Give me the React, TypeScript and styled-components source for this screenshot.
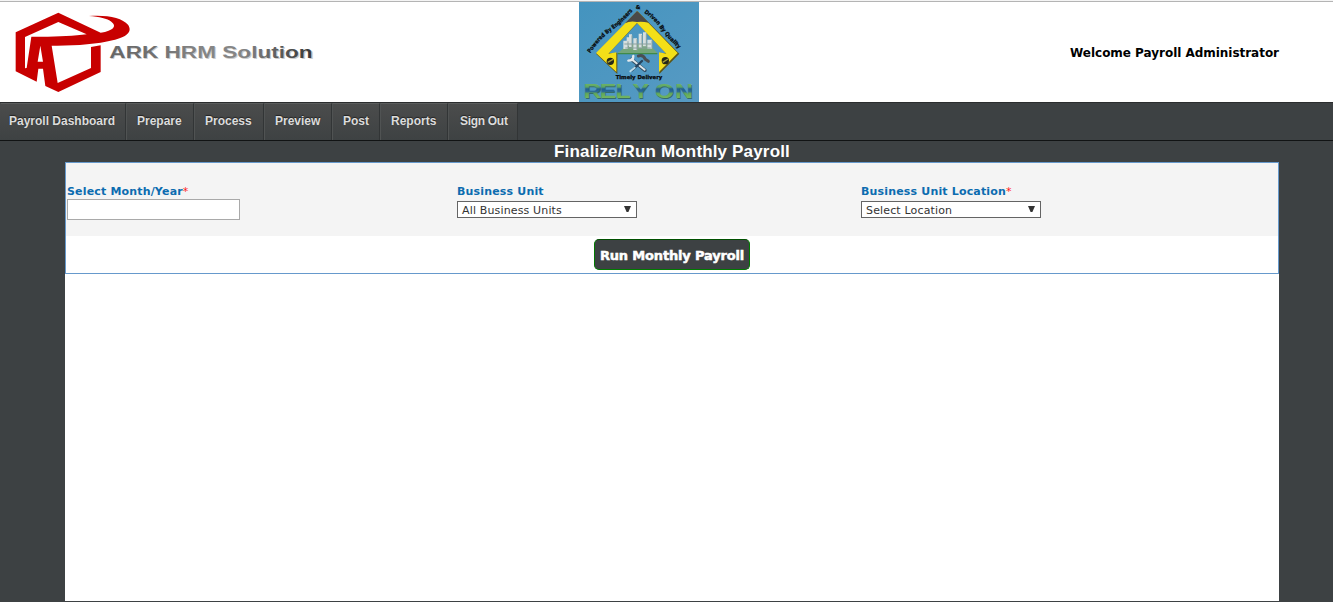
import React from "react";
import styled, { createGlobalStyle } from "styled-components";

const GlobalStyle = createGlobalStyle`
  * { box-sizing: border-box; }
  body {
    margin: 0;
    background: #3d4143;
    font-family: "DejaVu Sans", Verdana, sans-serif;
    font-size: 11px;
    overflow: hidden;
  }
`;

const Page = styled.div`
  height: 602px;
  display: flex;
  flex-direction: column;
`;

const Header = styled.header`
  flex: none;
  height: 102px;
  padding-right: 54px;
  border-top: 1px solid #f4f4f4;
  background: #fff;
  box-shadow: inset 0 1px 0 #b4b4b4;
  display: grid;
  grid-template-columns: 579px 120px 1fr;
  align-items: center;
`;

const Brand = styled.svg`
  display: block;
  width: 330px;
  height: 100px;
  margin-top: 1px;
`;

const ClientLogo = styled.svg`
  display: block;
  width: 120px;
  height: 100px;
  margin-top: 1px;
`;

const Welcome = styled.div`
  justify-self: end;
  padding-top: 2px;
  font-size: 12px;
  font-weight: bold;
  line-height: 16px;
  letter-spacing: -0.03px;
  white-space: nowrap;
  color: #000;
`;

const Nav = styled.nav`
  flex: none;
  height: 39px;
  display: flex;
  border-top: 1px solid #2b2d2e;
  border-bottom: 1px solid #111314;
`;

const NavItem = styled.a<{ $width: number; $indent?: number; $spacing?: number }>`
  width: ${(p) => p.$width}px;
  height: 37px;
  padding-left: ${(p) => p.$indent ?? 10}px;
  border-top: 1px solid #5b5d5d;
  border-left: 1px solid #505353;
  border-right: 1px solid #323536;
  background: linear-gradient(#4b4c4c, #3e4243);
  color: #dcdcdc;
  font: bold 12px/34px "Liberation Sans", Arial, sans-serif;
  letter-spacing: ${(p) => p.$spacing ?? 0}px;
  text-shadow: 0 -1px 1px #222;
  white-space: nowrap;

  &:first-child {
    border-left-color: transparent;
  }
`;

const Main = styled.main`
  flex: 1;
  margin: 0 54px 1px 65px;
  display: flex;
  flex-direction: column;
`;

const Title = styled.h1`
  margin: 0;
  height: 21px;
  color: #fff;
  text-align: center;
  font: bold 17px/21px "Liberation Sans", Arial, sans-serif;
  letter-spacing: 0.16px;
`;

const Content = styled.div`
  flex: 1;
  background: #fff;
`;

const Form = styled.form`
  height: 112px;
  border: 1px solid #6699cc;
`;

const Fields = styled.div`
  height: 73px;
  padding: 21px 0 0 1px;
  background: #f4f4f4;
  display: grid;
  grid-template-columns: 390px 404px 1fr;
`;

const Label = styled.label`
  display: block;
  height: 15px;
  color: #0c6cb0;
  font-size: 11px;
  font-weight: bold;
  line-height: 15px;
  letter-spacing: 0.17px;
  white-space: nowrap;
`;

const Required = styled.span`
  color: #ff2020;
  font-weight: normal;
`;

const MonthInput = styled.input`
  display: block;
  width: 173px;
  height: 21px;
  border: 1px solid #a9a9a9;
  background: #fff;
`;

const SelectBox = styled.div`
  width: 180px;
  height: 17px;
  margin-top: 2px;
  padding: 0 5px 0 4px;
  border: 1px solid #646464;
  background: #fff;
  color: #333;
  font-size: 11px;
  line-height: 17px;
  letter-spacing: 0.15px;
  display: flex;
  justify-content: space-between;
`;

const Caret = styled.svg`
  width: 7px;
  height: 6px;
  margin-top: 4px;
`;

const Actions = styled.div`
  height: 37px;
  padding-top: 3px;
  display: flex;
  justify-content: center;
`;

const RunButton = styled.button`
  width: 156px;
  height: 31px;
  padding: 2px 0 0;
  border: 1px solid #007a00;
  border-top-color: #005000;
  border-radius: 5px;
  background: #3d4143;
  color: #fff;
  font: 800 13px/16px "DejaVu Sans", Verdana, sans-serif;
  letter-spacing: -0.17px;
  -webkit-text-stroke: 0.5px #fff;
  white-space: nowrap;
`;

const menu = [
  { label: "Payroll Dashboard", width: 126, indent: 8 },
  { label: "Prepare", width: 68 },
  { label: "Process", width: 70 },
  { label: "Preview", width: 68 },
  { label: "Post", width: 48 },
  { label: "Reports", width: 68 },
  { label: "Sign Out", width: 70, indent: 11, spacing: -0.3 },
];

function Select({ value }: { value: string }) {
  return (
    <SelectBox>
      <span>{value}</span>
      <Caret viewBox="0 0 7 6">
        <path d="M0 0H7L4.4 6H2.6Z" fill="#333" />
      </Caret>
    </SelectBox>
  );
}

function ArkLogo() {
  return (
    <Brand viewBox="0 6 990 300">
      <defs>
        <linearGradient id="ark" x1="0" x2="1" y1="0" y2="0">
          <stop offset="0" stopColor="#666" />
          <stop offset=".25" stopColor="#737373" />
          <stop offset=".45" stopColor="#858585" />
          <stop offset=".65" stopColor="#858585" />
          <stop offset="1" stopColor="#383838" />
        </linearGradient>
      </defs>
      <g fill="#c80000">
        <path
          fillRule="evenodd"
          d="M175 38L302 98C340 92 352 78 334 65C322 56 298 50 267 48C322 44 367 54 384 74C399 96 379 111 338 121C290 133 222 138 155 137L173 249L273 204V141L302 136V216L175 276L136 258L129 206H115L110 245L47 214V97ZM175 66L75 111V205L80 204L94 110C157 111 218 109 260 103ZM121 137L113 185H129Z"
        />
      </g>
      <text
        x="330"
        y="178"
        fill="#ccc"
        fontFamily="Liberation Sans, Arial, sans-serif"
        fontSize="48"
        fontWeight="bold"
        textLength="612"
        lengthAdjust="spacingAndGlyphs"
        aria-hidden="true"
      >
        ARK HRM Solution
      </text>
      <text
        x="328"
        y="175"
        fill="url(#ark)"
        fontFamily="Liberation Sans, Arial, sans-serif"
        fontSize="48"
        fontWeight="bold"
        textLength="610"
        lengthAdjust="spacingAndGlyphs"
      >
        ARK HRM Solution
      </text>
    </Brand>
  );
}

function RelyonLogo() {
  return (
    <ClientLogo viewBox="27 6 360 300">
      <defs>
        <linearGradient id="sky" x1="0" y1="0" x2="1" y2="1">
          <stop offset="0" stopColor="#4494bf" />
          <stop offset="1" stopColor="#579ac3" />
        </linearGradient>
        <linearGradient id="letters" gradientUnits="userSpaceOnUse" x1="0" y1="250" x2="0" y2="294">
          <stop offset="0" stopColor="#72b562" />
          <stop offset=".25" stopColor="#5ba568" />
          <stop offset=".38" stopColor="#1f5f93" />
          <stop offset=".55" stopColor="#2a6996" />
          <stop offset=".7" stopColor="#62a958" />
          <stop offset="1" stopColor="#72b562" />
        </linearGradient>
        <path id="leftArc" d="M61 160Q88 118 124 92T192 28" />
        <path id="rightArc" d="M222 38Q252 58 270 84T330 150" />
      </defs>
      <rect x="27" y="6" width="360" height="300" fill="url(#sky)" />
      <path
        d="M203 34L328 161L268 222V158L288 160L202 70L116 160L142 158V222L78 161Z"
        fill="#5d5518"
      />
      <path
        d="M201 34L323 159L267 216V157L289 161L201 69L115 161L139 157V216L78 159Z"
        fill="#f3df18"
      />
      <path d="M201 33L236 68Q218 64 201 66Q180 62 165 70Z" fill="#4a4948" />
      <path d="M157 148L168 133H238L262 159H143Z" fill="#74a67a" />
      <path d="M143 159H262V163H143Z" fill="#3f8b47" />
      <path
        d="M160 122h14v25h-14zM177 103h9v38h-9zM190 115h11v35h-11zM206 101h10v42h-10zM219 97h10v42h-10zM232 119h14v27h-14zM170 112h8v25h-8z"
        fill="#d6dfdf"
      />
      <path
        d="M174 124v22M186 106v38M201 117v35M216 105v37M229 101v40M246 121v25M163 132h80M166 144h76"
        stroke="#8ba19e"
        strokeWidth="3"
      />
      <g fill="none" strokeLinecap="round">
        <path d="M184 178L225 211" stroke="#314d62" strokeWidth="10" />
        <path d="M184 177L224 209" stroke="#dce5ea" strokeWidth="6" />
        <path d="M175 182L188 180L190 168" stroke="#e5eaec" strokeWidth="7" />
        <path d="M216 183L186 211" stroke="#26445e" strokeWidth="7" />
        <path d="M194 203L181 214" stroke="#b9dae9" strokeWidth="6" />
        <path d="M205 168Q220 163 226 178L235 184" stroke="#4a4f52" strokeWidth="9" />
      </g>
      <g>
        <circle cx="121" cy="184" r="11" fill="#242818" />
        <circle cx="286" cy="182" r="11" fill="#242818" />
        <path d="M113 187L129 178M278 187L294 177" stroke="#a99d36" strokeWidth="4" />
      </g>
      <g
        fill="#080b0c"
        stroke="#080b0c"
        strokeWidth=".8"
        fontFamily="DejaVu Sans, sans-serif"
        fontSize="17"
        fontWeight="bold"
      >
        <text textLength="181" lengthAdjust="spacingAndGlyphs">
          <textPath href="#leftArc">Powered By Engineers</textPath>
        </text>
        <text x="197" y="27" fontSize="16">&amp;</text>
        <text textLength="151" lengthAdjust="spacingAndGlyphs">
          <textPath href="#rightArc">Driven By Quality</textPath>
        </text>
        <text x="137" y="237" fontSize="16" textLength="140" lengthAdjust="spacingAndGlyphs">
          Timely Delivery
        </text>
      </g>
      <g
        transform="scale(1.2 1)"
        fontFamily="Liberation Sans, Arial, sans-serif"
        fontSize="62"
        fontWeight="bold"
      >
        <text x="36 76.5 116 158 214 264.5" y="297" fill="#356b69" aria-hidden="true">
          RELYON
        </text>
        <text x="34 74.5 114 156 212 262.5" y="294" fill="url(#letters)">
          RELYON
        </text>
      </g>
    </ClientLogo>
  );
}

export default function App() {
  return (
    <>
      <GlobalStyle />
      <Page>
        <Header>
          <ArkLogo />
          <RelyonLogo />
          <Welcome>Welcome Payroll Administrator</Welcome>
        </Header>
        <Nav>
          {menu.map((item) => (
            <NavItem
              key={item.label}
              $width={item.width}
              $indent={item.indent}
              $spacing={item.spacing}
            >
              {item.label}
            </NavItem>
          ))}
        </Nav>
        <Main>
          <Title>Finalize/Run Monthly Payroll</Title>
          <Content>
            <Form>
              <Fields>
                <div>
                  <Label>
                    Select Month/Year<Required>*</Required>
                  </Label>
                  <MonthInput />
                </div>
                <div>
                  <Label>Business Unit</Label>
                  <Select value="All Business Units" />
                </div>
                <div>
                  <Label>
                    Business Unit Location<Required>*</Required>
                  </Label>
                  <Select value="Select Location" />
                </div>
              </Fields>
              <Actions>
                <RunButton type="button">Run Monthly Payroll</RunButton>
              </Actions>
            </Form>
          </Content>
        </Main>
      </Page>
    </>
  );
}
